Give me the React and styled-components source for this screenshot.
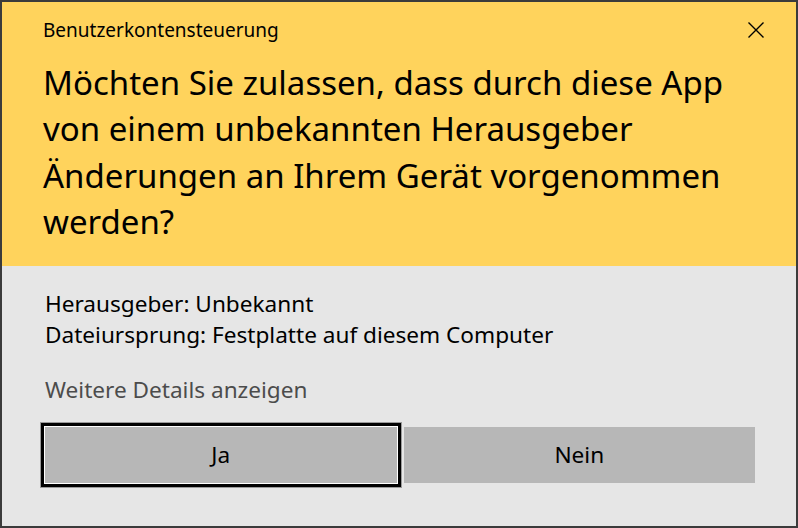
import React from "react";
import styled, { createGlobalStyle } from "styled-components";

const Global = createGlobalStyle`
  html, body {
    margin: 0;
    padding: 0;
    background: #3b3b3b;
  }
  body {
    font-family: "Noto Sans", "Open Sans", sans-serif;
    color: #000;
  }
`;

const Window = styled.div`
  width: 798px;
  height: 528px;
  box-sizing: border-box;
  border: 2px solid #3b3b3b;
  display: flex;
  flex-direction: column;
  background: #e6e6e6;
`;

const Header = styled.div`
  background: #ffd35c;
  padding: 14px 0 20px 41px;
  position: relative;
`;

const Caption = styled.div`
  font-size: 19px;
  line-height: 28px;
`;

const Question = styled.h1`
  margin: 16px 0 0;
  font-weight: normal;
  font-size: 33px;
  line-height: 46.4px;
  white-space: nowrap;
`;

const CloseButton = styled.button`
  position: absolute;
  top: 20px;
  right: 32px;
  width: 16px;
  height: 16px;
  padding: 0;
  border: 0;
  background: transparent;
  display: flex;
`;

const Body = styled.div`
  flex: 1;
  padding: 22px 41px 0 43px;
  display: flex;
  flex-direction: column;
`;

const InfoLine = styled.div`
  font-size: 22.6px;
  line-height: 31px;
`;

const DetailsLink = styled.div`
  margin-top: 24px;
  font-size: 22.6px;
  line-height: 31px;
  color: #4c4c4c;
`;

const Buttons = styled.div`
  margin-top: 22px;
  display: flex;
  gap: 7px;
`;

const Button = styled.button`
  flex: 1;
  height: 56px;
  border: 0;
  background: #b7b7b7;
  font-family: inherit;
  font-size: 22.6px;
  color: #000;
  box-shadow: ${(p) =>
    p.$focused ? "0 0 0 1px #fff, 0 0 0 4px #000, 0 0 0 5px #9a9a9a" : "none"};
`;

export default function App() {
  return (
    <>
      <Global />
      <Window>
        <Header>
          <Caption>Benutzerkontensteuerung</Caption>
          <Question>
            Möchten Sie zulassen, dass durch diese App
            <br />
            von einem unbekannten Herausgeber
            <br />
            Änderungen an Ihrem Gerät vorgenommen
            <br />
            werden?
          </Question>
          <CloseButton aria-label="Schließen">
            <svg width="16" height="16" viewBox="0 0 16 16">
              <path d="M0.5 0.5 L15.5 15.5 M15.5 0.5 L0.5 15.5" stroke="#000" strokeWidth="1.4" />
            </svg>
          </CloseButton>
        </Header>
        <Body>
          <InfoLine>Herausgeber: Unbekannt</InfoLine>
          <InfoLine>Dateiursprung: Festplatte auf diesem Computer</InfoLine>
          <DetailsLink>Weitere Details anzeigen</DetailsLink>
          <Buttons>
            <Button $focused>Ja</Button>
            <Button>Nein</Button>
          </Buttons>
        </Body>
      </Window>
    </>
  );
}
